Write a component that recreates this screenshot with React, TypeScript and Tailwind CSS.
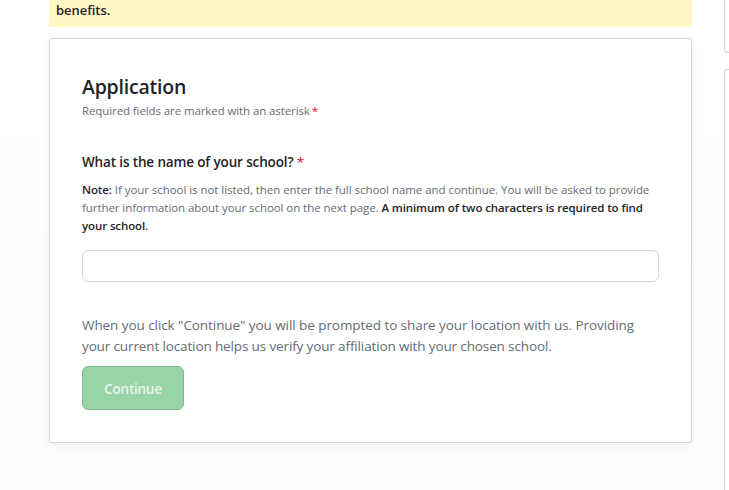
import React from "react";

export default function App() {
  return (
    <div className="flex h-[490px] w-[729px] overflow-hidden bg-linear-to-b from-white to-[#fdfdfd] font-['Open_Sans','Noto_Sans',sans-serif] text-[#1f2328]">
      <main className="ml-[49px] w-[643px] shrink-0">
        <div className="h-[27px] bg-[#fff8c5] px-[7px] text-[13px] leading-[21px] font-semibold tracking-[-0.05px]">benefits.</div>
        <section className="mt-[11px] h-[405px] rounded-[3px] border border-[#d0d7de] bg-white px-8 pt-[34px] whitespace-nowrap shadow-[0_3px_6px_rgba(140,149,159,0.15)]">
          <h1 className="text-[19.5px] leading-[28px] font-semibold tracking-[-0.22px]">Application</h1>
          <p className="mt-px text-[11.5px] leading-[18px] tracking-[-0.1px] text-[#656d76]">
            Required fields are marked with an asterisk<span className="ml-[2px] text-red-600">*</span>
          </p>
          <form className="mt-8">
            <label htmlFor="school" className="block text-[13.5px] leading-[21px] font-semibold tracking-[-0.14px]">
              What is the name of your school? <span className="font-normal text-red-600">*</span>
            </label>
            <p className="mt-2 text-[11.5px] leading-[18px] tracking-[-0.05px] text-[#656d76]">
              <b className="font-semibold tracking-[-0.11px] text-[#1f2328]">Note:</b> If your school is not listed, then enter the full school name and continue. You will be asked to provide
              <br />
              <span className="tracking-[-0.07px]">further information about your school on the next page. </span>
              <b className="font-semibold tracking-[-0.11px] text-[#1f2328]">A minimum of two characters is required to find</b>
              <br />
              <b className="font-semibold tracking-[-0.11px] text-[#1f2328]">your school.</b>
            </p>
            <input id="school" className="mt-[15px] block h-8 w-full rounded-md border border-[#d0d7de] bg-white px-3 text-sm" />
            <p className="mt-[33px] text-[13.5px] leading-[21px] tracking-[-0.07px] text-[#656d76]">
              When you click "Continue" you will be prompted to share your location with us. Providing
              <br />
              <span className="tracking-[-0.13px]">your current location helps us verify your affiliation with your chosen school.</span>
            </p>
            <button type="button" className="mt-[9px] block h-11 w-[102px] rounded-md border border-[#83bc91] bg-[#99d4a6] pt-[2px] text-[13.5px] font-semibold tracking-[-0.25px] text-[#e9f7ec]">
              Continue
            </button>
          </form>
        </section>
      </main>
      <aside className="ml-8 w-[260px] shrink-0">
        <div className="h-[53px] rounded-b-[3px] border border-t-0 border-[#d0d7de] bg-white" />
        <div className="mt-4 h-[500px] rounded-[3px] border border-[#d0d7de] bg-white" />
      </aside>
    </div>
  );
}
